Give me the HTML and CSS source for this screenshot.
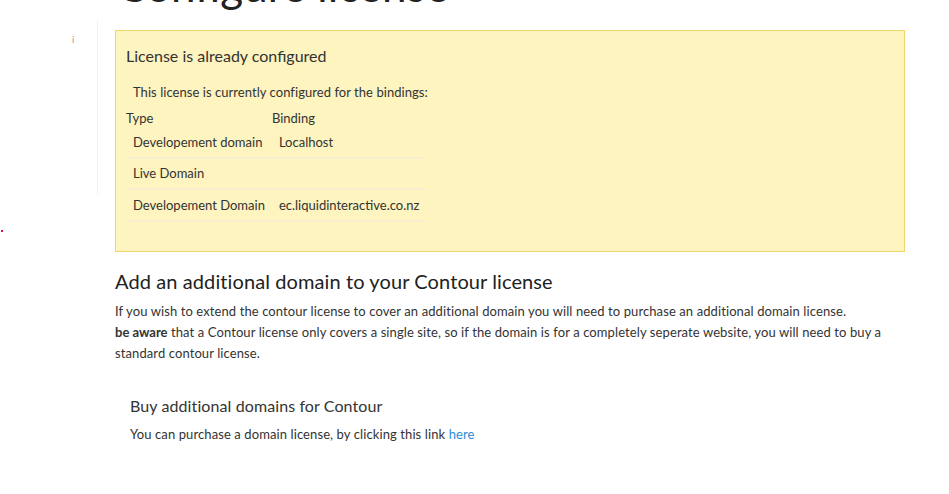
FILE: index.html
```html
<!DOCTYPE html>
<html>
<head>
    <title>Configure license</title>
    <link rel="stylesheet" href="styles.css">
</head>
<body>
    <div class="page">
        <div class="side">
            <span class="side-mark">i</span>
            <span class="red-dot"></span>
        </div>
        <div class="main">
            <h1 class="page-title">Configure license</h1>

            <!-- current license bindings -->
            <div class="license-box">
                <h3>License is already configured</h3>
                <p class="intro">This license is currently configured for the bindings:</p>
                <table class="bindings">
                    <thead>
                        <tr>
                            <th>Type</th>
                            <th>Binding</th>
                        </tr>
                    </thead>
                    <tbody>
                        <tr>
                            <td>Developement domain</td>
                            <td>Localhost</td>
                        </tr>
                        <tr>
                            <td>Live Domain</td>
                            <td></td>
                        </tr>
                        <tr>
                            <td>Developement Domain</td>
                            <td>ec.liquidinteractive.co.nz</td>
                        </tr>
                    </tbody>
                </table>
            </div>

            <h2>Add an additional domain to your Contour license</h2>
            <p class="text">
                If you wish to extend the contour license to cover an additional domain you will need to purchase an additional domain license.<br>
                <b>be aware</b> that a Contour license only covers a single site, so if the domain is for a completely seperate website, you will need to buy a standard contour license.
            </p>

            <div class="buy">
                <h4>Buy additional domains for Contour</h4>
                <p class="text">You can purchase a domain license, by clicking this link <a href="#">here</a></p>
            </div>
        </div>
    </div>
</body>
</html>
```

FILE: styles.css
```css
body {
    margin: 0;
    background-color: white;
    font-family: Lato, "Open Sans", sans-serif;
    color: #333;
    overflow: hidden;
}

.page {
    display: flex;
    height: 494px;
}

.side {
    position: relative;
    width: 98px;
    flex-shrink: 0;
}

.side::after {
    content: "";
    position: absolute;
    right: 0;
    top: 20px;
    height: 175px;
    border-right: 1px solid #f2f2f2;
}

.side-mark {
    position: absolute;
    left: 72px;
    top: 34px;
    font-size: 9px;
    color: #999;
}

.red-dot {
    position: absolute;
    left: 1px;
    top: 230px;
    width: 2px;
    height: 2px;
    background-color: #d4145a;
}

.main {
    width: 790px;
    padding-left: 17px;
}

.page-title {
    font-size: 44px;
    font-weight: normal;
    line-height: 50px;
    margin: -40px 0 20px 2px;
    color: #222;
}

.license-box {
    background-color: #fef4bf;
    border: 1px solid #efd76a;
    height: 220px;
    padding: 0 10px;
    color: #333;
}

.license-box h3 {
    font-size: 16px;
    font-weight: normal;
    margin: 15px 0 0;
    line-height: 20px;
}

.license-box .intro {
    font-size: 13px;
    margin: 16px 0 0 7px;
    line-height: 20px;
    letter-spacing: 0.05px;
}

.bindings {
    border-collapse: collapse;
    font-size: 13px;
    margin-top: 5px;
}

.bindings th {
    text-align: left;
    font-weight: normal;
    padding: 1px 0 0;
    line-height: 20px;
}

.bindings td {
    padding: 4px 7px 5px 7px;
    line-height: 20px;
    border-bottom: 2px solid #f6eed0;
}

.bindings tr:last-child td {
    padding-top: 5px;
}

.bindings td:last-child {
    width: 140px;
}

h2 {
    font-size: 20px;
    font-weight: normal;
    line-height: 24px;
    margin: 17px 0 8px;
    color: #222;
    letter-spacing: 0.1px;
}

.text {
    font-size: 13px;
    line-height: 21px;
    margin: 0;
    letter-spacing: 0.1px;
}

.text b {
    letter-spacing: 0;
}

.buy {
    padding-left: 15px;
    margin-top: 32px;
}

.buy h4 {
    font-size: 16px;
    font-weight: normal;
    line-height: 20px;
    margin: 0 0 8px;
    letter-spacing: 0.1px;
}

a {
    color: #2a8bd8;
    text-decoration: none;
}
```
